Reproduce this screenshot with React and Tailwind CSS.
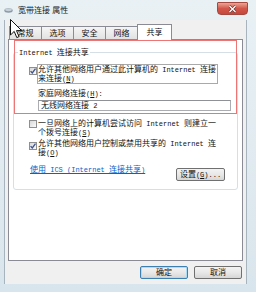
import React from "react";

const L = ({ children }) => (
  <span className="font-['Liberation_Mono',monospace] text-[7px] leading-[0px]">{children}</span>
);

function Check({ checked, className = "" }) {
  return (
    <span
      className={
        "w-[8px] h-[8px] shrink-0 border border-[#8f8f8f] bg-linear-to-br from-[#d8d8d8] to-[#fbfbfb] flex items-center justify-center " +
        className
      }
    >
      {checked && (
        <svg width="6" height="6" viewBox="0 0 6 6">
          <path d="M0.6 3.1 L2.3 5 L5.5 0.6" stroke="#3c5391" strokeWidth="1.3" fill="none" />
        </svg>
      )}
    </span>
  );
}

function Tab({ children, selected }) {
  if (selected) {
    return (
      <div className="relative z-10 -ml-px -mb-px w-[35px] h-[16px] border border-b-0 border-[#898c95] bg-white flex items-center justify-center pb-[1px]">
        {children}
      </div>
    );
  }
  return (
    <div className="-ml-px first:ml-0 w-[33px] h-[13px] border border-b-0 border-[#898c95] bg-linear-to-b from-[#f5f5f5] to-[#e2e2e2] flex items-center justify-center">
      {children}
    </div>
  );
}

function Btn({ children, def, className = "" }) {
  return (
    <div
      className={
        "h-[13px] rounded-[2px] border flex items-center justify-center bg-linear-to-b from-[#f3f3f3] via-[#e8e8e8] to-[#d6d6d6] " +
        (def ? "border-[#3c7fb1] shadow-[inset_0_0_0_1px_#a9dcf5] " : "border-[#707070] ") +
        className
      }
    >
      <span className="whitespace-nowrap">{children}</span>
    </div>
  );
}

export default function App() {
  return (
    <div className="relative w-[256px] h-[292px] overflow-hidden bg-linear-to-b from-[#e9f1f5] to-[#d9e5ec] font-['Liberation_Sans','Noto_Sans_CJK_SC',sans-serif] text-[8px] leading-[9px] text-[#111]">
      {/* title bar */}
      <div className="h-[20px] flex items-start">
        <div className="h-[20px] flex items-center pl-[4px] gap-[4px]">
          <svg width="9" height="6" viewBox="0 0 9 6">
            <ellipse cx="4.5" cy="3.5" rx="4.2" ry="2.2" fill="#8c9aa6" />
            <ellipse cx="4.5" cy="2.8" rx="3.4" ry="1.4" fill="#c6d1da" />
          </svg>
          <span className="text-[#1a1a1a] ml-[1px] whitespace-nowrap">宽带连接 属性</span>
        </div>
        <div className="ml-auto mr-[8px] mt-[2px] w-[31px] h-[13px] rounded-b-[4px] rounded-t-[1px] border border-[#a5483f] bg-linear-to-b from-[#eaa596] via-[#d2574a] to-[#c54a3d] flex items-center justify-center">
          <svg width="9" height="8" viewBox="0 0 9 8">
            <path d="M1.5 1 L7.5 7 M7.5 1 L1.5 7" stroke="#6a3a35" strokeWidth="2.6" />
            <path d="M1.5 1 L7.5 7 M7.5 1 L1.5 7" stroke="#ffffff" strokeWidth="1.3" />
          </svg>
        </div>
      </div>

      {/* client area */}
      <div className="ml-[4px] w-[243px] h-[264px] bg-[#f0f0f0] border-l border-r border-[#a7b4be] pl-[3px] pt-[4px] flex flex-col">
        {/* tabs */}
        <div className="h-[15px] flex items-end pl-[1px]">
          <Tab>常规</Tab>
          <Tab>选项</Tab>
          <Tab>安全</Tab>
          <Tab>网络</Tab>
          <Tab selected>共享</Tab>
        </div>

        {/* panel */}
        <div className="w-[235px] h-[222px] border border-[#898c95] bg-white px-[4px]">
          <fieldset className="mt-[8px] h-[142px] border border-[#d5dfe5] rounded-[3px]">
            <legend className="ml-[4px] px-[1px] h-[9px] whitespace-nowrap">
              <L>Internet </L>连接共享
            </legend>

            {/* row 1 */}
            <div className="mt-[7px] pl-[15px] flex items-start">
              <Check checked className="mt-[3px]" />
              <div className="border border-[#a9a9a9] pr-[1px] h-[20px] whitespace-nowrap">
                允许其他网络用户通过此计算机的<L> Internet </L>连接
                <br />
                来连接<L>(<u>N</u>)</L>
              </div>
            </div>

            <div className="mt-[5px] pl-[24px] h-[9px] whitespace-nowrap">
              家庭网络连接<L>(<u>H</u>):</L>
            </div>
            <div className="mt-[2px] ml-[24px] w-[193px] h-[11px] border border-[#abadb3] border-t-[#8e9197] bg-white flex items-center pl-[2px]">
              <span className="whitespace-nowrap">
                无线网络连接<L> 2</L>
              </span>
            </div>

            {/* row 2 */}
            <div className="mt-[8px] pl-[15px] flex items-start">
              <Check className="mt-[1px]" />
              <div className="ml-[1px] h-[18px] whitespace-nowrap">
                一旦网络上的计算机尝试访问<L> Internet </L>则建立一
                <br />
                个拨号连接<L>(<u>S</u>)</L>
              </div>
            </div>

            {/* row 3 */}
            <div className="mt-[2px] pl-[15px] flex items-start">
              <Check checked className="mt-[3px]" />
              <div className="ml-[1px] h-[18px] whitespace-nowrap">
                允许其他网络用户控制或禁用共享的<L> Internet </L>连
                <br />
                接<L>(<u>O</u>)</L>
              </div>
            </div>

            {/* link + settings */}
            <div className="mt-[8px] flex items-start">
              <span className="ml-[16px] h-[9px] text-[#0066cc] underline whitespace-nowrap">
                使用<L> ICS (Internet </L>连接共享<L>)</L>
              </span>
              <Btn className="ml-auto mr-[12px] mt-[3px] w-[49px] h-[12px]">
                设置<L>(<u>G</u>)...</L>
              </Btn>
            </div>
          </fieldset>
        </div>

        {/* bottom buttons */}
        <div className="mt-[5px] flex justify-end gap-[6px] pr-[4px]">
          <Btn def className="w-[48px]">确定</Btn>
          <Btn className="w-[48px]">取消</Btn>
        </div>
      </div>

      {/* annotation red rectangle */}
      <div className="absolute left-[14px] top-[40px] w-[223px] h-[74px] border-[1.5px] border-[#ee7575] pointer-events-none" />

      {/* mouse cursor */}
      <svg className="absolute left-[10px] top-[19px]" width="13" height="20" viewBox="0 0 13 20">
        <path
          d="M0.5 0.5 L0.5 16 L4.2 12.4 L6.8 18.6 L9 17.6 L6.5 11.6 L11.6 11.6 Z"
          fill="#ffffff"
          stroke="#111111"
          strokeWidth="1"
          strokeLinejoin="round"
        />
      </svg>
    </div>
  );
}
